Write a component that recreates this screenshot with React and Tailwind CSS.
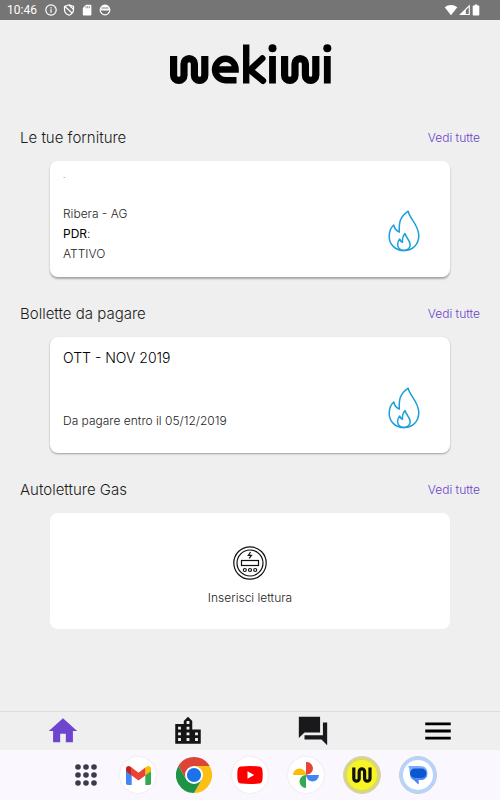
import React from "react";

function StatusBar() {
  return (
    <div className="flex h-5 items-center justify-between bg-[#757575] pr-5 pl-[7px] text-white">
      <div className="flex items-center gap-[6px]">
        <span className="mr-[2px] font-[Roboto,sans-serif] text-[12px] leading-5 font-normal">10:46</span>
        <svg className="size-3" viewBox="0 0 12 12" fill="none" stroke="currentColor" strokeWidth="1.2">
          <circle cx="6" cy="6" r="5.2" />
          <path d="M6 5.3v3.4M6 3.2v1.3" />
        </svg>
        <svg className="size-3" viewBox="0 0 12 12" fill="none" stroke="currentColor" strokeWidth="1.2">
          <path d="M6 .8 10.5 2.5V5.6C10.5 8.2 8.6 10.4 6 11.3 3.4 10.4 1.5 8.2 1.5 5.6V2.5ZM2 2.5 9.3 9.2M6 1 10.4 5.4" />
        </svg>
        <svg className="size-3" viewBox="0 0 12 12">
          <path fill="currentColor" d="M5 .8h4.4q1 0 1 1v8.600q0 1-1 1H2.800q-1 0-1-1V4Z" />
          <path stroke="#757575" strokeWidth=".8" d="M5 2.2v2M6.700 2.200v2M8.400 2.200v2" />
        </svg>
        <svg className="size-3" viewBox="0 0 12 12">
          <circle cx="6" cy="6" r="4.800" fill="none" stroke="currentColor" strokeWidth="1.200" />
          <path fill="currentColor" d="M1.500 4.500Q2.500 1 6 1t4.500 3.500L9.500 6.500H2.500Z" />
          <path stroke="#757575" strokeWidth=".9" d="M2.500 4h7" />
        </svg>
      </div>
      <div className="flex items-center gap-px">
        <svg className="h-3 w-[14px]" viewBox="0 0 14 12" fill="currentColor">
          <path d="M7 11.200 .700 3.200Q3.500 .900 7 .900t6.300 2.300Z" />
        </svg>
        <svg className="h-3 w-3" viewBox="0 0 12 12">
          <path fill="none" stroke="currentColor" strokeWidth="1.1" d="M1.500 10.500 10.300 1.800v8.700Z" />
          <path fill="currentColor" d="M1 11 6.800 5.200V11Z" />
        </svg>
        <svg className="h-3 w-2" viewBox="0 0 8 12" fill="currentColor">
          <path d="M2.700.500h2.600v1h1.200q.800 0 .800.800v8.400q0 .800-.800.800h-5q-.800 0-.800-.800V2.300q0-.800.800-.800h1.200Z" />
        </svg>
      </div>
    </div>
  );
}

function Logo() {
  return (
    <svg className="h-11 w-[164px]" viewBox="168 42 164 44" role="img" aria-label="wekiwi" fill="none" stroke="#000" strokeWidth="7.200">
      <path d="M173.600 56V75.200a5.200 5.200 0 0 0 10.400 0V63.800a5.200 5.200 0 0 1 10.400 0V75.200a5.200 5.200 0 0 0 10.400 0V56" />
      <path d="M216 69.500H235.600C235.600 63.400 231 58.800 225.500 58.800S215 63.600 215 69.500 219.600 80.200 225.500 80.200H236.500" strokeWidth="6.400" />
      <path d="M246.200 44.500V83.500" strokeWidth="6.400" />
      <path d="M262.300 58.500 250 70 263 80.800" strokeWidth="6.400" strokeLinecap="round" />
      <path d="M272.500 56V83.500M327.300 56V83.500" strokeWidth="6.800" />
      <circle cx="272.500" cy="48.300" r="4" fill="#000" stroke="none" />
      <circle cx="327.300" cy="48.300" r="4" fill="#000" stroke="none" />
      <path d="M284.600 56V75.200a5.200 5.200 0 0 0 10.400 0V63.800a5.200 5.200 0 0 1 10.400 0V75.200a5.200 5.200 0 0 0 10.400 0V56" />
    </svg>
  );
}

function Flame() {
  return (
    <svg className="h-[42px] w-8 shrink-0" viewBox="0 0 32 42" fill="none" stroke="#1b9fdc" strokeWidth="1.500" strokeLinejoin="round">
      <path d="M20.200 1.200C21 8 30.800 15 30.800 25.500 30.800 34 25 40.600 16 40.600S1.200 34 1.200 26.500C1.200 21.500 3 17.500 5.700 15 6.500 18.500 8.300 20.700 11.300 22.200 10.800 12 12 7 20.200 1.200Z" />
      <path d="M17 23.500C18 28 22.200 30 22.200 35 22.200 38 19.500 40.600 16 40.600S9.600 38 9.600 34.500C9.600 32.500 10.200 30.800 11.700 29 12.300 31 13 31.800 14.500 32.200 14.200 28.500 14.800 26 17 23.500Z" />
    </svg>
  );
}

function Meter() {
  return (
    <svg className="size-[34px]" viewBox="0 0 34 34" fill="none" stroke="#111" strokeWidth="1.200">
      <circle cx="17" cy="17" r="16.200" />
      <circle cx="17" cy="17" r="13" />
      <rect x="8.500" y="14.500" width="17" height="5" />
      <circle cx="11.800" cy="24" r="1.500" />
      <circle cx="17" cy="24" r="1.500" />
      <circle cx="22.200" cy="24" r="1.500" />
      <path d="M17.600 6 15.300 9.300H18.500L16.200 12.400" />
    </svg>
  );
}

function Section({ title, children }) {
  return (
    <section>
      <div className="flex h-6 items-center justify-between px-5">
        <h2 className="text-[15px] leading-6">{title}</h2>
        <a href="#" className="text-[12px] leading-6 text-[#6941cc]">Vedi tutte</a>
      </div>
      <div className="mx-[50px] mt-[11px]">{children}</div>
    </section>
  );
}

const navItems = [
  { label: "Home", color: "text-[#6d45cf]", d: "M10 20v-6h4v6h5v-8h3L12 3 2 12h3v8z" },
  {
    label: "Forniture",
    color: "text-[#151515]",
    d: "M15 11V5l-3-3-3 3v2H3v14h18V11h-6zm-8 8H5v-2h2v2zm0-4H5v-2h2v2zm0-4H5V9h2v2zm6 8h-2v-2h2v2zm0-4h-2v-2h2v2zm0-4h-2V9h2v2zm0-4h-2V5h2v2zm6 12h-2v-2h2v2zm0-4h-2v-2h2v2z",
  },
  { label: "Messaggi", color: "text-[#19191b]", d: "M22 6h-3v9H6v3h12l4 4V6zM17 13V2H2v15l4-4h11z" },
  { label: "Menu", color: "text-black", d: "M3 18h18v-2H3v2zm0-5h18v-2H3v2zm0-7v2h18V6H3z" },
];

function Dock() {
  const item = "flex w-14 justify-center";
  const disc = "flex size-9 items-center justify-center rounded-full bg-white shadow-[0_0_2px_rgba(0,0,0,0.12)]";
  return (
    <div className="flex h-[50px] items-center justify-center bg-[#faf7ff] pl-2">
      <button aria-label="App" className="flex w-12 justify-center">
        <svg className="size-[22px]" viewBox="0 0 22 22" fill="#3a3a49">
          {[3, 11, 19].map((y) => [3, 11, 19].map((x) => <circle key={`${x}-${y}`} cx={x} cy={y} r="2.800" />))}
        </svg>
      </button>
      <button aria-label="Gmail" className={item}>
        <span className={disc}>
          <svg className="h-[19px] w-[25px]" viewBox="0 0 25 19">
            <path fill="#4285f4" d="M0 5v12.300Q0 19 1.700 19H5.700V8.500Z" />
            <path fill="#34a853" d="M19.300 19h4q1.700 0 1.700-1.700V5l-5.700 3.500Z" />
            <path fill="#fbbc04" d="M19.300 1.500v8L25 5.200V2.700C25 .400 22.500-.700 20.500.700Z" />
            <path fill="#ea4335" d="M5.700 9.500v-8L12.500 6.800l6.800-5.300v8l-6.800 5Z" />
            <path fill="#c5221f" d="M0 2.700v2.500L5.700 9.500v-8L4.500.700C2.500-.700 0 .400 0 2.700Z" />
          </svg>
        </span>
      </button>
      <button aria-label="Chrome" className={item}>
        <svg className="size-9" viewBox="0 0 36 36">
          <path fill="#db4437" d="M18 0A18 18 0 0 1 33.600 9H18L10.200 22.500 2.400 9A18 18 0 0 1 18 0Z" />
          <path fill="#fcc014" d="M33.600 9A18 18 0 0 1 18 36L25.800 22.500 18 9Z" />
          <path fill="#1e9348" d="M2.400 9A18 18 0 0 0 18 36L25.800 22.500H10.200Z" />
          <circle cx="18" cy="18" r="9" fill="#fff" />
          <circle cx="18" cy="18" r="7.100" fill="#1a73e8" />
        </svg>
      </button>
      <button aria-label="YouTube" className={item}>
        <span className={disc}>
          <svg className="h-[18px] w-[26px]" viewBox="0 0 26 18">
            <path fill="#f00" d="M4 .400Q13-.400 22 .400 25 .600 25.400 4 26 9 25.400 14 25 17.400 22 17.600 13 18.400 4 17.600 1 17.400.600 14 0 9 .600 4 1 .600 4 .400Z" />
            <path fill="#fff" d="M10.500 5.200 17.200 9l-6.700 3.800Z" />
          </svg>
        </span>
      </button>
      <button aria-label="Foto" className={item}>
        <span className={disc}>
          <svg className="size-[26px]" viewBox="0 0 26 26">
            <path fill="#ea4335" d="M13 0a6.500 6.500 0 0 1 4.500 11.500L13 13Z" />
            <path fill="#4285f4" d="M26 13a6.500 6.500 0 0 1-13 0Z" />
            <path fill="#34a853" d="M13 26a6.500 6.500 0 0 1 0-13Z" />
            <path fill="#fbbc04" d="M0 13a6.500 6.500 0 0 1 13 0Z" />
          </svg>
        </span>
      </button>
      <button aria-label="Wekiwi" className={item}>
        <span className="flex size-[38px] items-center justify-center rounded-full border border-[#d5d3b8] bg-[#d9d779]">
          <span className="flex size-[30px] items-center justify-center rounded-full bg-[#f8f525]">
            <svg className="h-4 w-5" viewBox="0 0 20 16" fill="none" stroke="#111" strokeWidth="3.200">
              <path d="M1.800.500V11.500a2.700 2.700 0 0 0 5.400 0V4.500a2.700 2.700 0 0 1 5.400 0V11.500a2.700 2.700 0 0 0 5.400 0V.500" />
            </svg>
          </span>
        </span>
      </button>
      <button aria-label="Messaggi SMS" className={item}>
        <span className="flex size-[38px] items-center justify-center rounded-full border border-[#c5cede] bg-[#b5d3fc]">
          <span className="flex size-[30px] items-center justify-center rounded-full bg-white">
            <svg className="h-5 w-5" viewBox="0 0 20 20">
              <path fill="#7dabfb" d="M.300 1h11.500Q19.500 1 19.500 8t-7.500 7h-1.500v4.500L6 15Q1.800 13.500 1.800 8 1.800 4 .300 1Z" />
              <path fill="#4e83f5" d="M2.500 11Q5 14 10 13.500q6 0 9.300-4.500Q18.500 15 12 15h-1.500v4.500L6 15Q3.500 14 2.500 11Z" />
              <rect x="2" y="3.500" width="16.500" height="9.500" rx="4.700" fill="#0b57d0" />
            </svg>
          </span>
        </span>
      </button>
    </div>
  );
}

export default function App() {
  const card = "flex h-[116px] rounded-[8px] bg-white";
  return (
    <div className="flex min-h-screen flex-col bg-[#efefef] font-['Inter','Liberation_Sans',sans-serif] font-light text-[#1c1c1c]">
      <StatusBar />
      <header className="flex justify-center pt-[22px]">
        <Logo />
      </header>
      <main className="flex flex-1 flex-col gap-[25px] pt-10 pb-6">
        <Section title="Le tue forniture">
          <article className={`${card} items-end justify-between pr-[30px] pl-[13px] shadow-[0_2px_2px_rgba(0,0,0,0.3)]`}>
            <div className="flex h-full flex-col justify-between pt-2 pb-[13px] text-[12px] leading-5">
              <p className="text-[8px] leading-3">.</p>
              <div>
                <p>Ribera - AG</p>
                <p><span className="font-normal text-black">PDR</span>:</p>
                <p>ATTIVO</p>
              </div>
            </div>
            <div className="pb-[25px]"><Flame /></div>
          </article>
        </Section>
        <Section title="Bollette da pagare">
          <article className={`${card} items-end justify-between pr-[30px] pl-[13px] shadow-[0_1px_2px_rgba(0,0,0,0.35)]`}>
            <div className="flex h-full flex-col justify-between pt-[11px] pb-[22px]">
              <h3 className="text-[14px] leading-5 text-black">OTT - NOV 2019</h3>
              <p className="text-[12px] leading-5">Da pagare entro il 05/12/2019</p>
            </div>
            <div className="pb-6"><Flame /></div>
          </article>
        </Section>
        <Section title="Autoletture Gas">
          <button className={`${card} w-full flex-col items-center justify-end gap-2 pb-[21px]`}>
            <Meter />
            <span className="text-[12px] leading-5">Inserisci lettura</span>
          </button>
        </Section>
      </main>
      <nav className="grid h-[39px] grid-cols-4 border-t border-[#dcdcdc]">
        {navItems.map((n) => (
          <button key={n.label} aria-label={n.label} className={`flex items-center justify-center ${n.color}`}>
            <svg className="size-[34px]" viewBox="0 0 24 24" fill="currentColor"><path d={n.d} /></svg>
          </button>
        ))}
      </nav>
      <Dock />
    </div>
  );
}
